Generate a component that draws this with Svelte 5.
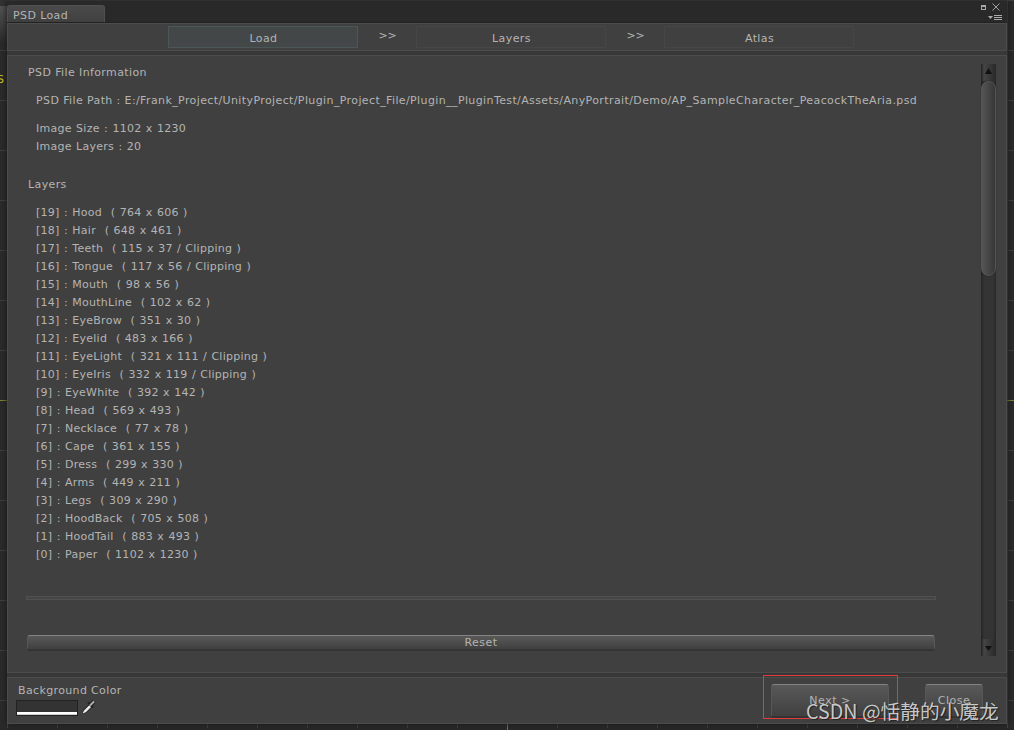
<script>
  const layers = [
    'Hood  ( 764 x 606 )', 'Hair  ( 648 x 461 )', 'Teeth  ( 115 x 37 / Clipping )',
    'Tongue  ( 117 x 56 / Clipping )', 'Mouth  ( 98 x 56 )', 'MouthLine  ( 102 x 62 )',
    'EyeBrow  ( 351 x 30 )', 'Eyelid  ( 483 x 166 )', 'EyeLight  ( 321 x 111 / Clipping )',
    'EyeIris  ( 332 x 119 / Clipping )', 'EyeWhite  ( 392 x 142 )', 'Head  ( 569 x 493 )',
    'Necklace  ( 77 x 78 )', 'Cape  ( 361 x 155 )', 'Dress  ( 299 x 330 )',
    'Arms  ( 449 x 211 )', 'Legs  ( 309 x 290 )', 'HoodBack  ( 705 x 508 )',
    'HoodTail  ( 883 x 493 )', 'Paper  ( 1102 x 1230 )'
  ];
</script>

<div class="desktop">
  <span class="behind">S</span>
  <div class="peek"></div>
  <div class="window">
    <header>
      <div class="tab">PSD Load</div>
      <svg class="controls" width="26" height="22" viewBox="0 0 26 22">
        <path d="M2 5h5v5h-5z M3 7v2h3v-2z" fill="#a6a6a6" fill-rule="evenodd" />
        <path d="M13.500 3.500l7 7m0-7l-7 7" stroke="#a0a0a0" fill="none" />
        <path d="M9 16h5l-2.500 3zM15 15h8v1h-8zM15 17h8v1h-8zM15 19h8v1h-8z" fill="#ababab" />
      </svg>
    </header>
    <nav>
      <div class="step active">Load</div><span class="arrows">&gt;&gt;</span>
      <div class="step">Layers</div><span class="arrows">&gt;&gt;</span>
      <div class="step">Atlas</div>
    </nav>
    <main>
      <section>
        <p>PSD File Information</p>
        <p class="in path">PSD File Path : E:/Frank_Project/UnityProject/Plugin_Project_File/Plugin__PluginTest/Assets/AnyPortrait/Demo/AP_SampleCharacter_PeacockTheAria.psd</p>
        <p class="in spaced">Image Size : 1102 x 1230</p>
        <p class="in spaced">Image Layers : 20</p>
        <p class="heading">Layers</p>
        <div class="list spaced">
          {#each layers as layer, i}
            <p class="in">[{19 - i}] : {layer}</p>
          {/each}
        </div>
        <div class="rule"></div>
        <button class="reset">Reset</button>
      </section>
      <div class="scroll">
        <svg width="15" height="17" viewBox="0 0 15 17"><path d="M4 10h7l-3.500-6z" fill="#111" /></svg>
        <div class="track"><div class="thumb"></div></div>
        <svg width="15" height="17" viewBox="0 0 15 17"><path d="M4 7h7l-3.500 5z" fill="#111" /></svg>
      </div>
    </main>
    <footer>
      <div class="bg">
        <p>Background Color</p>
        <div class="pick">
          <div class="swatch"></div>
          <svg width="15" height="15" viewBox="0 0 15 15">
            <path d="M1 14l1-4 7-7 3 3-7 7z" fill="#202020" />
            <path d="M1.500 13.500l1.500-3 6-6 1.800 1.800-6 6z" fill="#ececec" />
            <path d="M7 2.500l5 5" stroke="#222" stroke-width="2" />
            <path d="M9 5.500l4-4" stroke="#222" stroke-width="4" />
            <path d="M9 5.500l4-4" stroke="#b0b0b0" stroke-width="1.800" />
          </svg>
        </div>
      </div>
      <div class="outline"><button class="next">Next &gt;</button></div>
      <button class="close">Close</button>
    </footer>
  </div>
  <div class="watermark">CSDN @恬静的小魔龙</div>
</div>

<style>
  :global(body) { background: #2b2b2b; overflow: hidden; }
  * { box-sizing: border-box; }
  p { margin: 0; height: 18px; white-space: pre; }
  .desktop {
    position: relative; width: 1014px; height: 730px; padding: 0 7px 6px; overflow: hidden;
    font: 11px/18px "DejaVu Sans", sans-serif; letter-spacing: 0.39px; color: #b4b4b4;
    background:
      linear-gradient(#86862f, #86862f) 0 400px / 100% 1px no-repeat,
      linear-gradient(#86862f, #86862f) 507px 100% / 1px 6px no-repeat,
      linear-gradient(#292929, #292929) 0 100% / 100% 2px no-repeat,
      repeating-linear-gradient(90deg, #464646 0 1px, transparent 1px 50px) 7px 0 / 1007px 100% no-repeat,
      repeating-linear-gradient(#414141 0 1px, transparent 1px 50px), #2b2b2b;
  }
  .behind { position: absolute; left: -3px; top: 71px; color: #d8c820; }
  .peek { position: absolute; left: 0; top: 0; width: 7px; height: 42px; background: linear-gradient(#333 0 6px, #555 6px, #333 36px, #2c2c2c); }
  .window { position: relative; width: 1000px; height: 724px; display: flex; flex-direction: column; background: #383838; box-shadow: 0 0 7px #161616; }
  header { height: 23px; display: flex; justify-content: space-between; align-items: flex-end; background: #292929; border-top: 1px solid #303030; border-bottom: 1px solid #222; }
  .tab { width: 98px; height: 17px; padding-left: 5px; line-height: 19px; background: linear-gradient(#4a4a4a, #404040); border: 1px solid #505050; border-bottom: 0; border-radius: 3px 3px 0 0; }
  .controls { margin-right: 2px; }
  nav, main, footer { background: #404040; border: 1px solid #4c4c4c; }
  nav { height: 28px; padding: 2px 0 0 160px; display: flex; }
  .step { width: 190px; height: 22px; padding-left: 1px; line-height: 23px; text-align: center; border: 1px solid #464646; letter-spacing: 0.4px; }
  .active { background: #434747; border-color: #4b5657; }
  .arrows { width: 58px; padding-left: 1px; line-height: 19px; text-align: center; letter-spacing: -0.2px; }
  main { height: 618px; margin-top: 4px; padding: 8px 10px 0 18px; display: flex; justify-content: space-between; }
  section { width: 910px; }
  section p { padding-left: 2px; }
  section .in { padding-left: 10px; }
  section .path { margin: 10px 0; }
  .heading { margin-top: 20px; }
  .spaced { letter-spacing: 0.26px; word-spacing: 0.6px; }
  .list { margin-top: 10px; }
  .rule { height: 4px; margin-top: 32px; border: 1px solid #515151; background: #454545; }
  button { font: inherit; color: #b4b4b4; padding: 0; letter-spacing: 0.5px; border: 1px solid #575757; border-top-color: #838383; border-bottom-color: #353535; border-radius: 3px; background: linear-gradient(#595959, #404040); box-shadow: 0 1px #333; }
  .reset { display: block; width: 908px; height: 15px; margin: 35px 0 0 1px; line-height: 13px; }
  .scroll { width: 15px; height: 592px; display: flex; flex-direction: column; background: linear-gradient(90deg, #222, #333 3px, #353535 12px, #252525); }
  .scroll svg { flex: none; background: linear-gradient(90deg, #202020, #454545 3px, #292929); }
  .track { flex: 1; border-radius: 8px; background: linear-gradient(90deg, #262626, #333 3px, #343434 12px, #292929); }
  .thumb { height: 195px; border: 1px solid #555; border-radius: 8px; background: linear-gradient(90deg, #555, #373737); box-shadow: 0 0 1px #151515; }
  footer { height: 47px; margin-top: 4px; padding-left: 8px; display: flex; }
  .bg { flex: 1; padding-top: 4px; }
  .bg p { padding-left: 2px; letter-spacing: 0.36px; }
  .pick { display: flex; gap: 3px; }
  .swatch { width: 62px; height: 16px; background: linear-gradient(#333 11px, #fff 11px 13px, #ccc 13px); border: 1px solid #222; }
  .outline { width: 135px; height: 44px; margin: -3px 27px 0 0; padding: 8px 7px; border: 1px solid #e23b38; }
  .next { display: block; width: 118px; height: 33px; }
  .close { width: 58px; height: 33px; margin: 6px 23px 0 0; }
  .watermark { position: absolute; left: 806px; top: 698px; font: 19.7px/26px "Noto Sans CJK SC", sans-serif; letter-spacing: 0; color: rgba(220,220,220,.9); text-shadow: 1px 1px 1px #222; }
</style>
